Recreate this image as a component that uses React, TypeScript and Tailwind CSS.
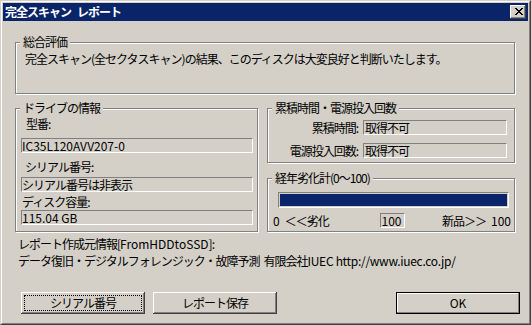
import React from 'react';

const GroupBox: React.FC<{ label: string; className?: string; children?: React.ReactNode }> = ({ label, className = '', children }) => (
  <div className={`relative border border-[#808080] shadow-[inset_1px_1px_0_#fff,1px_1px_0_#fff] ${className}`}>
    <span className="absolute left-[4px] -top-[7px] bg-[#d4d0c8] px-[3px] leading-[12px] whitespace-nowrap">{label}</span>
    {children}
  </div>
);

const Sunken: React.FC<{ className?: string; children?: React.ReactNode }> = ({ className = '', children }) => (
  <div className={`border border-t-[#808080] border-l-[#808080] border-b-white border-r-white whitespace-nowrap overflow-hidden ${className}`}>
    {children}
  </div>
);

const Button: React.FC<{ children: React.ReactNode; isDefault?: boolean; focused?: boolean; className?: string }> = ({
  children,
  isDefault,
  focused,
  className = '',
}) => (
  <button
    className={`h-[22px] w-[124px] bg-[#d4d0c8] text-black p-[3px] ${
      isDefault
        ? 'border border-black shadow-[inset_-1px_-1px_0_#808080,inset_1px_1px_0_#fff]'
        : 'shadow-[inset_-1px_-1px_0_#404040,inset_1px_1px_0_#fff,inset_-2px_-2px_0_#808080]'
    } ${className}`}
  >
    <div className={`h-full flex items-center justify-center leading-[12px] ${focused ? 'border border-dotted border-black' : ''}`}>
      {children}
    </div>
  </button>
);

const CloseGlyph: React.FC = () => {
  const rows = ['XX....XX', '.XX..XX.', '..XXXX..', '...XX...', '..XXXX..', '.XX..XX.', 'XX....XX'];
  return (
    <svg width="8" height="7" viewBox="0 0 8 7" shapeRendering="crispEdges">
      {rows.map((r, y) =>
        r.split('').map((c, x) => (c === 'X' ? <rect key={`${x}-${y}`} x={x} y={y} width="1" height="1" fill="#000" /> : null))
      )}
    </svg>
  );
};

export default function App() {
  return (
    <div className="w-[531px] h-[325px] bg-[#d4d0c8] border border-t-[#d4d0c8] border-l-[#d4d0c8] border-r-[#404040] border-b-[#404040] font-['Noto_Sans_CJK_JP','Noto_Sans',sans-serif] text-[12px] text-black tracking-[-1px] overflow-hidden">
      <div className="h-full border border-t-white border-l-white border-r-[#808080] border-b-[#808080] p-px flex flex-col">
        {/* title bar */}
        <div className="h-[18px] shrink-0 bg-[#0a246a] flex items-center justify-between pl-[2px] pr-[2px]">
          <span className="text-white font-bold leading-[12px] whitespace-nowrap">
            完全スキャン<span className="ml-[6px]">レポート</span>
          </span>
          <div className="w-[16px] h-[14px] bg-[#d4d0c8] shadow-[inset_-1px_-1px_0_#404040,inset_1px_1px_0_#fff,inset_-2px_-2px_0_#808080] flex items-center justify-center pl-[1px] pb-[1px]">
            <CloseGlyph />
          </div>
        </div>

        {/* body */}
        <div className="flex-1 flex flex-col pl-[12px] pr-[13px]">
          <GroupBox label="総合評価" className="mt-[21px] h-[52px] pt-[10px] pl-[9px]">
            <div className="leading-[12px] whitespace-nowrap">完全スキャン(全セクタスキャン)の結果、このディスクは大変良好と判断いたします。</div>
          </GroupBox>

          <div className="mt-[14px] flex gap-[9px]">
            <GroupBox label="ドライブの情報" className="w-[243px] h-[124px] flex flex-col">
              <div className="mt-[9px] ml-[10px] leading-[12px]">型番:</div>
              <Sunken className="mt-[8px] ml-[5px] w-[232px] h-[15px] leading-[13px] tracking-normal">IC35L120AVV207-0</Sunken>
              <div className="mt-[8px] ml-[9px] leading-[12px]">シリアル番号:</div>
              <Sunken className="mt-[4px] ml-[5px] w-[232px] h-[15px] leading-[13px]">シリアル番号は非表示</Sunken>
              <div className="mt-[4px] ml-[6px] leading-[12px]">ディスク容量:</div>
              <Sunken className="mt-[2px] ml-[5px] w-[232px] h-[15px] leading-[13px] tracking-normal">115.04 GB</Sunken>
            </GroupBox>

            <div className="w-[248px] flex flex-col">
              <GroupBox label="累積時間・電源投入回数" className="h-[55px] flex flex-col">
                <div className="mt-[11px] flex items-center">
                  <span className="w-[90px] text-right leading-[12px]">累積時間:</span>
                  <Sunken className="ml-[5px] w-[144px] h-[15px] leading-[13px] pl-px">取得不可</Sunken>
                </div>
                <div className="mt-[8px] flex items-center">
                  <span className="w-[90px] text-right leading-[12px]">電源投入回数:</span>
                  <Sunken className="ml-[5px] w-[144px] h-[15px] leading-[13px] pl-px">取得不可</Sunken>
                </div>
              </GroupBox>

              <GroupBox label="経年劣化計(0〜100)" className="mt-[15px] h-[54px] flex flex-col">
                <Sunken className="mt-[13px] ml-[10px] w-[231px] h-[16px] p-px">
                  <div className="h-full w-full bg-[#0a246a]" />
                </Sunken>
                <div className="mt-[5px] pl-[5px] pr-[3px] grid grid-cols-[1fr_auto_1fr] items-center">
                  <span className="leading-[12px] whitespace-nowrap">
                    0<span className="ml-[6px]">＜＜劣化</span>
                  </span>
                  <Sunken className="w-[25px] h-[15px] leading-[13px] pl-px tracking-normal">100</Sunken>
                  <span className="leading-[12px] text-right whitespace-nowrap">
                    新品＞＞<span className="ml-[5px] tracking-normal">100</span>
                  </span>
                </div>
              </GroupBox>
            </div>
          </div>

          <div className="mt-[6px] pl-[3px] leading-[12px] whitespace-nowrap">
            レポート作成元情報[<span className="tracking-normal">FromHDDtoSSD</span>]:
          </div>
          <div className="mt-[5px] pl-[3px] leading-[12px] whitespace-nowrap">
            データ復旧・デジタルフォレンジック・故障予測<span className="ml-[4px]">有限会社</span>
            <span className="tracking-[-0.3px]">IUEC http://www.iuec.co.jp/</span>
          </div>

          <div className="mt-[25px] flex gap-[8px] pl-[6px] -mr-[5px]">
            <Button focused>シリアル番号</Button>
            <Button>レポート保存</Button>
            <Button isDefault className="ml-auto tracking-normal">OK</Button>
          </div>
        </div>
      </div>
    </div>
  );
}
